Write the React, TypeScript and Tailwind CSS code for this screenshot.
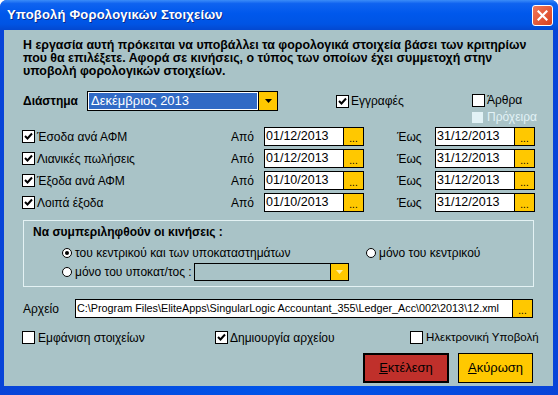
import React from "react";

const sans = "font-['Liberation_Sans',Arial,sans-serif]";

function CheckBox({ checked = false }: { checked?: boolean }) {
  return (
    <span className="w-[13px] h-[13px] border border-black bg-white flex items-center justify-center shrink-0">
      {checked && (
        <svg width="9" height="9" viewBox="0 0 9 9">
          <path d="M1 4 L3.5 6.5 L8 1.5" stroke="black" strokeWidth="2" fill="none" />
        </svg>
      )}
    </span>
  );
}

function Radio({ checked = false }: { checked?: boolean }) {
  return (
    <span className="w-[10px] h-[10px] rounded-full border border-black bg-white flex items-center justify-center shrink-0">
      {checked && <span className="w-[4px] h-[4px] rounded-full bg-black" />}
    </span>
  );
}

function DotsButton() {
  return (
    <span className="w-[20px] h-full bg-[#ffc800] border-l border-black flex items-end justify-center text-[10px] leading-[12px] text-black">
      ...
    </span>
  );
}

function DateField({ value }: { value: string }) {
  return (
    <div className="w-[100px] h-[19px] border border-black flex">
      <span className="flex-1 bg-white pl-[1px] text-[12.5px] leading-[17px]">{value}</span>
      <DotsButton />
    </div>
  );
}

const rows = [
  { label: "Έσοδα ανά ΑΦΜ", from: "01/12/2013", to: "31/12/2013" },
  { label: "Λιανικές πωλήσεις", from: "01/12/2013", to: "31/12/2013" },
  { label: "Έξοδα ανά ΑΦΜ", from: "01/10/2013", to: "31/12/2013" },
  { label: "Λοιπά έξοδα", from: "01/10/2013", to: "31/12/2013" },
];

export default function App() {
  return (
    <div className={`w-[558px] h-[395px] flex flex-col bg-[#0a3fd8] rounded-t-[7px] overflow-hidden ${sans} text-black`}>
      {/* title bar */}
      <div className="h-[30px] flex items-center justify-between pl-[7px] pr-[5px] bg-[linear-gradient(180deg,#3b8cf8_0%,#0f63f0_12%,#0058ec_45%,#0054e4_80%,#0348d0_100%)]">
        <span className="text-white font-bold text-[13px] tracking-[0.2px] [text-shadow:1px_1px_0_#0a2a8a]">
          Υποβολή Φορολογικών Στοιχείων
        </span>
        <span className="w-[21px] h-[21px] rounded-[3px] border border-white bg-[linear-gradient(135deg,#f0785a,#d8401e)] flex items-center justify-center">
          <svg width="11" height="11" viewBox="0 0 11 11">
            <path d="M1.5 1.5 L9.5 9.5 M9.5 1.5 L1.5 9.5" stroke="white" strokeWidth="2.2" strokeLinecap="square" />
          </svg>
        </span>
      </div>

      {/* frame */}
      <div className="flex-1 flex pl-[4px] pr-[5px] pb-[9px] bg-[linear-gradient(90deg,#0844d8,#0055ea_50%,#0844d8)]">
        <div className="flex-1 bg-[#a9c3c7] pl-[18px] pt-[9px] flex flex-col text-[12px]">
          <p className="pl-[1px] font-bold text-[12.4px] leading-[13px] whitespace-nowrap">
            Η εργασία αυτή πρόκειται να υποβάλλει τα φορολογικά στοιχεία βάσει των κριτηρίων
            <br />
            που θα επιλέξετε. Αφορά σε κινήσεις, ο τύπος των οποίων έχει συμμετοχή στην
            <br />
            υποβολή φορολογικών στοιχείων.
          </p>

          {/* period row */}
          <div className="mt-[13px] flex items-start">
            <span className="w-[65px] pl-[1px] font-bold text-[12px] leading-[20px]">Διάστημα</span>
            <div className="w-[191px] h-[20px] border border-black flex">
              <span className="flex-1 border border-white bg-[#316ac5] text-white text-[13px] leading-[16px] pl-[2px]">
                Δεκέμβριος 2013
              </span>
              <span className="w-[19px] bg-[#ffc800] border-l border-black flex items-center justify-center">
                <svg width="7" height="4" viewBox="0 0 7 4">
                  <path d="M0 0 H7 L3.5 4 Z" fill="black" />
                </svg>
              </span>
            </div>
            <div className="ml-[58px] mt-[4px] w-[136px] flex items-center gap-[2px]">
              <CheckBox checked />
              <span className="leading-[13px]">Εγγραφές</span>
            </div>
            <div className="mt-[3px] flex flex-col gap-[4px]">
              <div className="flex items-center gap-[2px]">
                <CheckBox />
                <span className="leading-[13px]">Άρθρα</span>
              </div>
              <div className="flex items-center gap-[4px]">
                <span className="w-[11px] h-[11px] bg-[#e2f2f6]" />
                <span className="leading-[13px] text-[#e2f2f6]">Πρόχειρα</span>
              </div>
            </div>
          </div>

          {/* date rows */}
          <div className="mt-[3px] flex flex-col gap-[3px]">
            {rows.map((r) => (
              <div key={r.label} className="h-[19px] flex items-center">
                <div className="w-[209px] flex items-center gap-[2px]">
                  <CheckBox checked />
                  <span>{r.label}</span>
                </div>
                <span className="w-[33px]">Από</span>
                <DateField value={r.from} />
                <span className="ml-[33px] w-[38px]">Έως</span>
                <DateField value={r.to} />
              </div>
            ))}
          </div>

          {/* group box */}
          <div className="mt-[8px] ml-[1px] w-[511px] h-[67px] border border-[#e4f2f4] pl-[9px] pt-[5px] flex flex-col">
            <span className="font-bold text-[12px] leading-[13px]">Να συμπεριληφθούν οι κινήσεις :</span>
            <div className="mt-[7px] h-[13px] flex items-center">
              <div className="ml-[29px] w-[304px] flex items-center gap-[3px] whitespace-nowrap">
                <Radio checked />
                <span>του κεντρικού και των υποκαταστημάτων</span>
              </div>
              <div className="flex items-center gap-[3px] whitespace-nowrap">
                <Radio />
                <span>μόνο του κεντρικού</span>
              </div>
            </div>
            <div className="mt-[4px] h-[18px] flex items-center">
              <div className="ml-[29px] w-[132px] flex items-center gap-[3px] whitespace-nowrap">
                <Radio />
                <span>μόνο του υποκατ/τος :</span>
              </div>
              <div className="w-[155px] h-[18px] border border-black flex">
                <span className="flex-1" />
                <span className="w-[18px] bg-[#ffc800] border-l border-black flex items-center justify-center">
                  <svg width="7" height="4" viewBox="0 0 7 4">
                    <path d="M0 0 H7 L3.5 4 Z" fill="#fff0a0" />
                  </svg>
                </span>
              </div>
            </div>
          </div>

          {/* file row */}
          <div className="mt-[12px] h-[19px] flex items-center">
            <span className="w-[53px] pl-[1px]">Αρχείο</span>
            <div className="w-[458px] h-[19px] border border-black flex">
              <span className="flex-1 bg-white pl-[1px] text-[10.8px] leading-[17px] whitespace-nowrap overflow-hidden">
                C:\Program Files\EliteApps\SingularLogic Accountant_355\Ledger_Acc\002\2013\12.xml
              </span>
              <DotsButton />
            </div>
          </div>

          {/* options row */}
          <div className="mt-[13px] h-[13px] flex items-center">
            <div className="w-[193px] flex items-center gap-[3px]">
              <CheckBox />
              <span>Εμφάνιση στοιχείων</span>
            </div>
            <div className="w-[195px] flex items-center gap-[2px]">
              <CheckBox checked />
              <span>Δημιουργία αρχείου</span>
            </div>
            <div className="flex items-center gap-[3px]">
              <CheckBox />
              <span className="text-[11.5px]">Ηλεκτρονική Υποβολή</span>
            </div>
          </div>

          {/* buttons */}
          <div className="mt-[9px] flex justify-end gap-[9px] pr-[20px]">
            <button className="w-[86px] h-[30px] bg-[#c0302b] border-2 border-black text-[13px] text-black">
              <span className="underline">Ε</span>κτέλεση
            </button>
            <button className="w-[75px] h-[30px] bg-[#ffc800] border border-black text-[13px] text-black">
              <span className="underline">Α</span>κύρωση
            </button>
          </div>
        </div>
      </div>
    </div>
  );
}
